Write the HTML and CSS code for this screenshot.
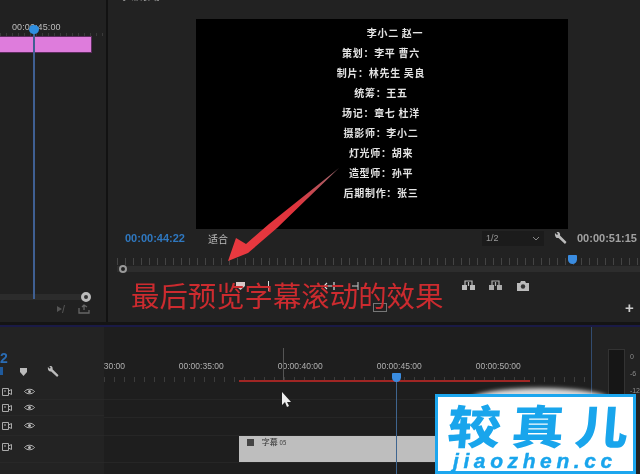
FILE: index.html
```html
<!DOCTYPE html>
<html lang="zh">
<head>
<meta charset="utf-8">
<title>字幕滚动预览</title>
<link rel="stylesheet" href="styles.css">
</head>
<body>
<div class="app">
  <div class="top">
    <section class="source">
      <div class="src-time">00:00:45:00</div>
      <div class="src-ruler"></div>
      <div class="src-clip"></div>
      <div class="src-fill"></div>
      <div class="src-scroll"><span class="src-knob"></span></div>
      <div class="src-tools">
        <svg class="ico" width="12" height="10" viewBox="0 0 12 10"><path d="M1 2l5 3-5 3zM8 1h1L7 9H6z" fill="#555"/></svg>
        <svg class="ico" width="12" height="10" viewBox="0 0 12 10"><path d="M1 4v5h10V6M6 6V1M4 3l2-2 3 2" fill="none" stroke="#666" stroke-width="1.3"/></svg>
      </div>
      <span class="src-playhead"></span>
    </section>
    <div class="split"></div>
    <section class="monitor">
      <div class="mon-title"><span class="mon-title-text">字幕滚动 ≡</span></div>
      <div class="video">
        <p class="credit credit-first">李小二 赵一</p>
        <p class="credit">策划：李平 曹六</p>
        <p class="credit">制片：林先生 吴良</p>
        <p class="credit">统筹：王五</p>
        <p class="credit">场记：章七 杜洋</p>
        <p class="credit">摄影师：李小二</p>
        <p class="credit">灯光师：胡来</p>
        <p class="credit">造型师：孙平</p>
        <p class="credit">后期制作：张三</p>
      </div>
      <div class="mon-bar">
        <span class="tc-blue">00:00:44:22</span>
        <span class="fit">适合</span>
        <svg class="chev-fit" width="8" height="5" viewBox="0 0 8 5"><path d="M1 1l3 3 3-3" fill="none" stroke="#777" stroke-width="1"/></svg>
        <span class="res"><span>1/2</span><svg width="8" height="5" viewBox="0 0 8 5"><path d="M1 1l3 3 3-3" fill="none" stroke="#888" stroke-width="1"/></svg></span>
        <svg class="wrench" width="13" height="13" viewBox="0 0 13 13"><path d="M1 1l2 2 1-1-1.500-2C5 -.5 6.500 1 6 3.500L12.500 10 11 12 4.500 6C2 6.500 .5 4 1 1z" fill="#bbb"/></svg>
        <span class="tc-grey">00:00:51:15</span>
      </div>
      <div class="mon-ruler"><span class="mon-head"></span></div>
      <div class="mon-scrub"><span class="mon-knob"></span></div>
      <div class="mon-buttons">
        <svg class="btn-mark" width="9" height="8" viewBox="0 0 9 8"><path d="M0 0h9v4L4.500 8 0 4z" fill="#d8c8c8"/></svg>
        <svg class="btn-tick" width="3" height="10" viewBox="0 0 3 10"><path d="M1.500 0v10" stroke="#ddd" stroke-width="1"/></svg>
        <svg class="btn-back" width="11" height="8" viewBox="0 0 11 8"><path d="M0 4h8M3 1L0 4l3 3M10 0v8" stroke="#ddd" fill="none" stroke-width="1.200"/></svg>
        <svg class="btn-fwd" width="9" height="8" viewBox="0 0 9 8"><path d="M0 4h6M6 0v8" stroke="#ccc" fill="none" stroke-width="1"/></svg>
        <svg class="btn-lift" width="15" height="11" viewBox="0 0 15 11"><path d="M1 5h5v5H1zM9 5h5v5H9z" fill="#bbb"/><path d="M4 5V1h7v4M7.500 2v4" fill="none" stroke="#bbb" stroke-width="1.200"/></svg>
        <svg class="btn-lift" width="15" height="11" viewBox="0 0 15 11"><path d="M1 5h5v5H1zM9 5h5v5H9z" fill="#aaa"/><path d="M4 5V1h7v4M7.500 6V2" fill="none" stroke="#aaa" stroke-width="1.200"/></svg>
        <svg class="btn-cam" width="12" height="10" viewBox="0 0 12 10"><path d="M0 2h3l1-2h4l1 2h3v8H0z" fill="#bbb"/><circle cx="6" cy="5.500" r="2.200" fill="#333"/></svg>
      </div>
      <div class="mon-plus-row"><span class="mon-box"></span><span class="plus">+</span></div>
    </section>
  </div>
  <div class="seam"></div>
  <div class="bottom">
    <section class="head">
      <div class="head-tc">2</div>
      <div class="head-tools">
        <span class="head-blue"></span>
        <svg class="shield" width="7" height="8" viewBox="0 0 7 8"><path d="M0 0h7v4L3.500 8 0 4z" fill="#bbb"/></svg>
        <svg class="wrench-sm" width="12" height="12" viewBox="0 0 13 13"><path d="M1 1l2 2 1-1-1.500-2C5 -.5 6.500 1 6 3.500L12.500 10 11 12 4.500 6C2 6.500 .5 4 1 1z" fill="#bbb"/></svg>
      </div>
      <div class="head-row r1"><svg class="film" width="10" height="8" viewBox="0 0 10 8"><path d="M.5.500h6v7h-6zM6.500 3L9.500 1.500v5L6.500 5M2 3h2" fill="none" stroke="#aaa"/></svg><svg class="eye" width="11" height="7" viewBox="0 0 11 7"><path d="M.5 3.500C3 .5 8 .5 10.500 3.500 8 6.500 3 6.500.5 3.500z" fill="none" stroke="#bbb"/><circle cx="5.500" cy="3.500" r="1.500" fill="#bbb"/></svg></div>
      <div class="head-row r2"><svg class="film" width="10" height="8" viewBox="0 0 10 8"><path d="M.5.500h6v7h-6zM6.500 3L9.500 1.500v5L6.500 5M2 3h2" fill="none" stroke="#aaa"/></svg><svg class="eye" width="11" height="7" viewBox="0 0 11 7"><path d="M.5 3.500C3 .5 8 .5 10.500 3.500 8 6.500 3 6.500.5 3.500z" fill="none" stroke="#bbb"/><circle cx="5.500" cy="3.500" r="1.500" fill="#bbb"/></svg></div>
      <div class="head-row r3"><svg class="film" width="10" height="8" viewBox="0 0 10 8"><path d="M.5.500h6v7h-6zM6.500 3L9.500 1.500v5L6.500 5M2 3h2" fill="none" stroke="#aaa"/></svg><svg class="eye" width="11" height="7" viewBox="0 0 11 7"><path d="M.5 3.500C3 .5 8 .5 10.500 3.500 8 6.500 3 6.500.5 3.500z" fill="none" stroke="#bbb"/><circle cx="5.500" cy="3.500" r="1.500" fill="#bbb"/></svg></div>
      <div class="head-row r4"><svg class="film" width="10" height="8" viewBox="0 0 10 8"><path d="M.5.500h6v7h-6zM6.500 3L9.500 1.500v5L6.500 5M2 3h2" fill="none" stroke="#aaa"/></svg><svg class="eye" width="11" height="7" viewBox="0 0 11 7"><path d="M.5 3.500C3 .5 8 .5 10.500 3.500 8 6.500 3 6.500.5 3.500z" fill="none" stroke="#bbb"/><circle cx="5.500" cy="3.500" r="1.500" fill="#bbb"/></svg></div>
    </section>
    <section class="tracks">
      <div class="ruler">
        <span class="rl rl-first">30:00</span>
        <span class="rl">00:00:35:00</span>
        <span class="rl">00:00:40:00</span>
        <span class="rl">00:00:45:00</span>
        <span class="rl">00:00:50:00</span>
      </div>
      <div class="track t1"></div>
      <div class="track t2"></div>
      <div class="track t3"></div>
      <div class="track t4"><div class="clip"><i class="clip-ico"></i><span class="clip-name">字幕 <small>05</small></span></div></div>
      <span class="marker"></span>
      <span class="workarea"></span>
      <span class="playhead"></span>
    </section>
    <section class="meter">
      <div class="meter-bar"></div>
      <div class="meter-scale"><span>0</span><span>-6</span><span>-12</span></div>
    </section>
  </div>

  <svg class="arrow" width="130" height="100" viewBox="0 0 130 100"><defs><linearGradient id="arrowFill" x1="1" y1="0" x2="0" y2="1"><stop offset="0" stop-color="#9a6a70"/><stop offset=".4" stop-color="#e0333c"/><stop offset="1" stop-color="#ea3a40"/></linearGradient></defs><path d="M130 0L68 60 39 85 19 93 27 70 37 76 60 56z" fill="url(#arrowFill)"/></svg>
  <div class="caption">最后预览字幕滚动的效果</div>
  <svg class="cursor" width="11" height="16" viewBox="0 0 11 16"><path d="M1 0v13l3-3 2 5 2-1-2-4h4z" fill="#eee"/></svg>
  <div class="glow"></div>
  <div class="mark">
    <div class="mark-cn">较真<span class="mark-last">儿</span></div>
    <div class="mark-en">jiaozhen.cc</div>
  </div>
</div>
</body>
</html>
```
FILE: styles.css
```css
* { box-sizing: border-box; }
html, body { margin: 0; background: #222; }
p { margin: 0; }
.app {
  position: relative; width: 640px; height: 474px; overflow: hidden;
  display: flex; flex-direction: column; background: #222;
  font-family: "Liberation Sans", "Noto Sans CJK SC", sans-serif;
  filter: blur(.35px);
}
.top { display: flex; height: 322px; }

/* source panel */
.source { position: relative; width: 106px; display: flex; flex-direction: column; padding-top: 22px; background: #212121; }
.src-time { height: 11px; margin-left: 12px; font-size: 9px; line-height: 11px; letter-spacing: .1px; color: #bdbdbd; }
.src-ruler { height: 3px; background: repeating-linear-gradient(90deg, #3a3a3a 0 1px, transparent 1px 6px); }
.src-clip { width: 92px; height: 17px; background: #de7cdc; border: 1px solid #5c2d5e; border-left: 0; }
.src-fill { flex: 1; }
.src-scroll { position: relative; height: 6px; width: 86px; background: #2c2c2c; }
.src-knob { position: absolute; right: -5px; top: -2px; width: 10px; height: 10px; border-radius: 50%; background: #333; border: 3px solid #bbb; }
.src-tools { height: 22px; display: flex; gap: 10px; padding: 4px 0 0 56px; }
.src-playhead { position: absolute; left: 33px; top: 25px; width: 2px; height: 274px; background: #3f5f92; }
.src-playhead::before { content: ""; position: absolute; left: -4px; top: 0; width: 10px; height: 9px; border-radius: 50%; background: #2f8fe0; }
.split { width: 2px; background: #121212; }

/* program monitor */
.monitor { flex: 1; min-width: 0; display: flex; flex-direction: column; background: #222; }
.mon-title { height: 19px; overflow: hidden; padding-left: 12px; }
.mon-title-text { display: block; margin-top: -9px; font-size: 10px; line-height: 12px; color: #999; }
.video { margin-left: 88px; width: 372px; height: 210px; padding-top: 4px; background: #000; }
.credit { height: 20px; width: 372px; text-align: center; transform: translateX(-1px); font-size: 10px; line-height: 20px; font-weight: 700; letter-spacing: .7px; color: #e4e4e4; font-family: "Noto Sans CJK SC", sans-serif; }
.credit-first { padding-left: 28px; }
.mon-bar { height: 18px; display: flex; align-items: center; padding-left: 17px; font-size: 11px; }
.tc-blue { width: 83px; font-weight: 700; color: #2f78c0; }
.fit { width: 50px; font-size: 10px; color: #bbb; font-family: "Noto Sans CJK SC", sans-serif; }
.chev-fit { margin-right: 216px; }
.res { width: 62px; height: 15px; padding: 0 4px; display: flex; justify-content: space-between; align-items: center; background: #1b1b1b; font-size: 9px; color: #999; }
.wrench { margin-left: 10px; }
.tc-grey { margin-left: 10px; font-weight: 700; white-space: nowrap; color: #a2a2a2; }
.mon-ruler { position: relative; margin-left: 9px; height: 13px; margin-top: 6px; background: repeating-linear-gradient(90deg, #444 0 1px, transparent 1px 8px) 0 5px / 100% 7px no-repeat; }
.mon-head { position: absolute; left: 451px; top: 2px; width: 9px; height: 9px; background: #3a8ce0; border-radius: 1px 1px 5px 5px; }
.mon-scrub { position: relative; margin-left: 9px; height: 6px; background: #2d2d2d; margin-bottom: 5px; }
.mon-knob { position: absolute; left: 2px; top: -1px; width: 8px; height: 8px; border-radius: 50%; background: #222; border: 2px solid #999; }
.mon-buttons { display: flex; align-items: center; height: 17px; padding-left: 128px; }
.btn-tick { margin-left: 22px; }
.btn-back { margin-left: 54px; }
.btn-fwd { margin-left: 17px; }
.btn-lift { margin-left: 12px; }
.btn-fwd + .btn-lift { margin-left: 100px; }
.btn-cam { margin-left: 14px; }
.mon-plus-row { display: flex; align-items: center; height: 19px; padding-top: 7px; }
.mon-box { width: 14px; height: 9px; margin-left: 265px; border: 1px solid #777; }
.plus { margin-left: 238px; font-size: 15px; font-weight: 700; color: #ccc; }

.seam { height: 5px; background: #141414; border-bottom: 2px solid #1a1a46; }

/* timeline */
.bottom { flex: 1; display: flex; min-height: 0; }
.head { width: 104px; background: #232323; }
.head-tc { padding-top: 23px; box-sizing: content-box; font-size: 14px; line-height: 16px; font-weight: 700; color: #2a6cb4; width: 8px; overflow: hidden; height: 16px; }
.head-tools { position: relative; height: 17px; margin-top: -3px; display: flex; align-items: center; padding-left: 20px; }
.head-blue { position: absolute; left: 0; top: 4px; width: 3px; height: 8px; background: #1f5a9c; }
.wrench-sm { margin-left: 20px; }
.head-row { display: flex; align-items: center; gap: 12px; padding-left: 2px; border-bottom: 1px solid #282828; }
.r1 { height: 16px; margin-top: 4px; }
.r2 { height: 16px; }
.r3 { height: 20px; }
.r4 { height: 27px; padding-bottom: 4px; }
.tracks { position: relative; width: 488px; background: #1e1e1e; }
.ruler { height: 56px; display: flex; align-items: flex-start; padding-top: 33px; font-size: 8.500px; color: #b0b0b0; background: repeating-linear-gradient(90deg, #3c3c3c 0 1px, transparent 1px 10px) 0 50px / 100% 5px no-repeat; }
.rl { width: 99px; line-height: 12px; }
.rl-first { width: 75px; }
.track { border-bottom: 1px solid #262626; }
.t1 { height: 17px; }
.t2 { height: 18px; }
.t3 { height: 18px; }
.t4 { height: 27px; padding-left: 135px; }
.clip { display: flex; align-items: flex-start; gap: 8px; height: 26px; width: 340px; padding: 1px 0 0 8px; background: #bebebe; color: #333; font-size: 8px; line-height: 9px; font-family: "Noto Sans CJK SC", sans-serif; }
.clip-ico { width: 7px; height: 7px; margin-top: 2px; background: #444; }
.clip-name small { font-size: 6px; }
.marker { position: absolute; left: 179px; top: 21px; width: 1px; height: 34px; background: #555; }
.workarea { position: absolute; left: 135px; top: 53px; width: 291px; height: 2px; background: #a02624; }
.playhead { position: absolute; left: 292px; top: 46px; width: 1px; height: 101px; background: #3f658f; }
.playhead::before { content: ""; position: absolute; left: -4px; top: 0; width: 9px; height: 9px; background: #3a8ce0; border-radius: 1px 1px 5px 5px; }
.meter { flex: 1; display: flex; gap: 5px; padding: 22px 0 0 16px; border-left: 1px solid #324c70; }
.meter-bar { width: 17px; height: 130px; background: #161616; border: 1px solid #333; }
.meter-scale { display: flex; flex-direction: column; gap: 9px; margin-top: 4px; font-size: 7px; line-height: 8px; color: #8c8c8c; }

/* overlays */
.arrow { position: absolute; left: 209px; top: 168px; }
.caption { position: absolute; left: 131px; top: 276px; font-size: 28.400px; line-height: 38px; white-space: nowrap; color: #cc2b2f; font-family: "Noto Sans CJK SC", sans-serif; }
.cursor { position: absolute; left: 281px; top: 392px; }
.glow { position: absolute; left: 470px; top: 388px; width: 140px; height: 12px; border-radius: 70px 70px 0 0 / 12px 12px 0 0; background: #d8d8d8; filter: blur(2px); }
.mark { position: absolute; left: 435px; top: 394px; width: 201px; height: 80px; background: #fff; border: 3px solid #1ca6ee; color: #19a5ec; }
.mark-cn { margin-left: 10px; padding-top: 1px; height: 54px; font-size: 46px; line-height: 53px; font-weight: 900; letter-spacing: 9.500px; white-space: nowrap; transform-origin: left center; transform: scaleX(1.15) skewX(-4deg); font-family: "Noto Sans CJK SC", sans-serif; }
.mark-last { letter-spacing: 0; }
.mark-en { margin-left: 15px; font-size: 21px; line-height: 20px; font-weight: 700; font-style: italic; letter-spacing: 4.600px; white-space: nowrap; -webkit-text-stroke: .4px #19a5ec; font-family: "Liberation Sans", sans-serif; }
```
